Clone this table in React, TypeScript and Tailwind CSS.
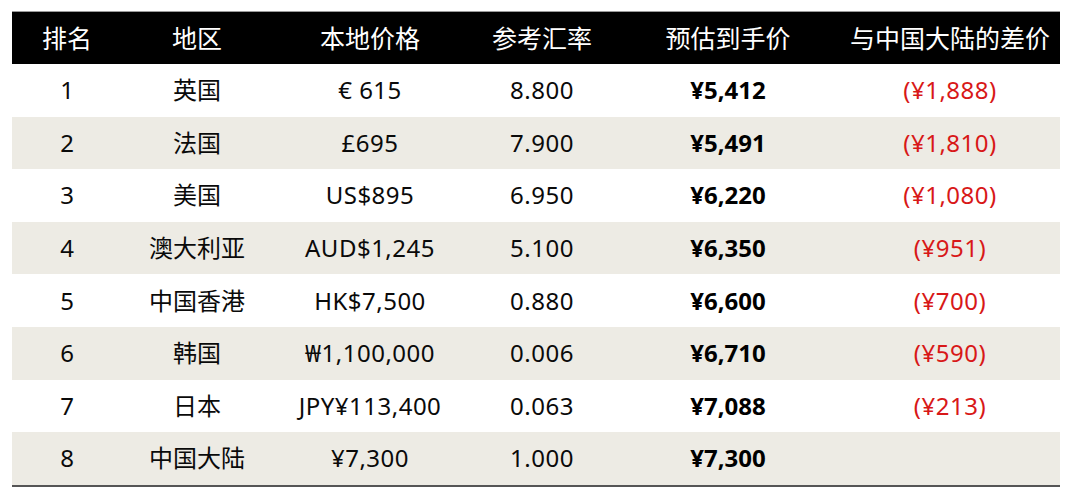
const rows = [
  { rank: '1', region: '英国', local: '€ 615', rate: '8.800', net: '¥5,412', diff: '(¥1,888)' },
  { rank: '2', region: '法国', local: '£695', rate: '7.900', net: '¥5,491', diff: '(¥1,810)' },
  { rank: '3', region: '美国', local: 'US$895', rate: '6.950', net: '¥6,220', diff: '(¥1,080)' },
  { rank: '4', region: '澳大利亚', local: 'AUD$1,245', rate: '5.100', net: '¥6,350', diff: '(¥951)' },
  { rank: '5', region: '中国香港', local: 'HK$7,500', rate: '0.880', net: '¥6,600', diff: '(¥700)' },
  { rank: '6', region: '韩国', local: '₩1,100,000', rate: '0.006', net: '¥6,710', diff: '(¥590)' },
  { rank: '7', region: '日本', local: 'JPY¥113,400', rate: '0.063', net: '¥7,088', diff: '(¥213)' },
  { rank: '8', region: '中国大陆', local: '¥7,300', rate: '1.000', net: '¥7,300', diff: '' },
]

const headers = ['排名', '地区', '本地价格', '参考汇率', '预估到手价', '与中国大陆的差价']

const cols = 'grid grid-cols-[110px_150px_196px_148px_224px_220px]'

export default function App() {
  return (
    <div
      className="w-[1078px] h-[496px] bg-white pt-[11px] pl-[12px]"
      style={{ fontFamily: '"Noto Sans", "Noto Sans CJK SC", sans-serif' }}
    >
      <div className="w-[1048px] border-t border-[#9a9a9a] border-b-2 border-b-[#555]">
        {/* header */}
        <div className={`${cols} h-[52px] bg-black text-white text-[25px] items-center`}>
          {headers.map((h) => (
            <div key={h} className="text-center leading-none">
              {h}
            </div>
          ))}
        </div>

        {rows.map((r, i) => (
          <div
            key={r.rank}
            className={`${cols} h-[52.6px] items-center text-[24px] text-[#0a0a0a] leading-none ${
              i % 2 === 1 ? 'bg-[#edebe4]' : 'bg-white'
            }`}
          >
            <div className="text-center">{r.rank}</div>
            <div className="text-center">{r.region}</div>
            <div className="text-center tracking-[0.5px]">{r.local}</div>
            <div className="text-center tracking-[0.5px]">{r.rate}</div>
            <div className="text-center font-bold text-black">{r.net}</div>
            <div className="text-center text-[#d81818] tracking-[0.5px]">{r.diff}</div>
          </div>
        ))}
      </div>
    </div>
  )
}
